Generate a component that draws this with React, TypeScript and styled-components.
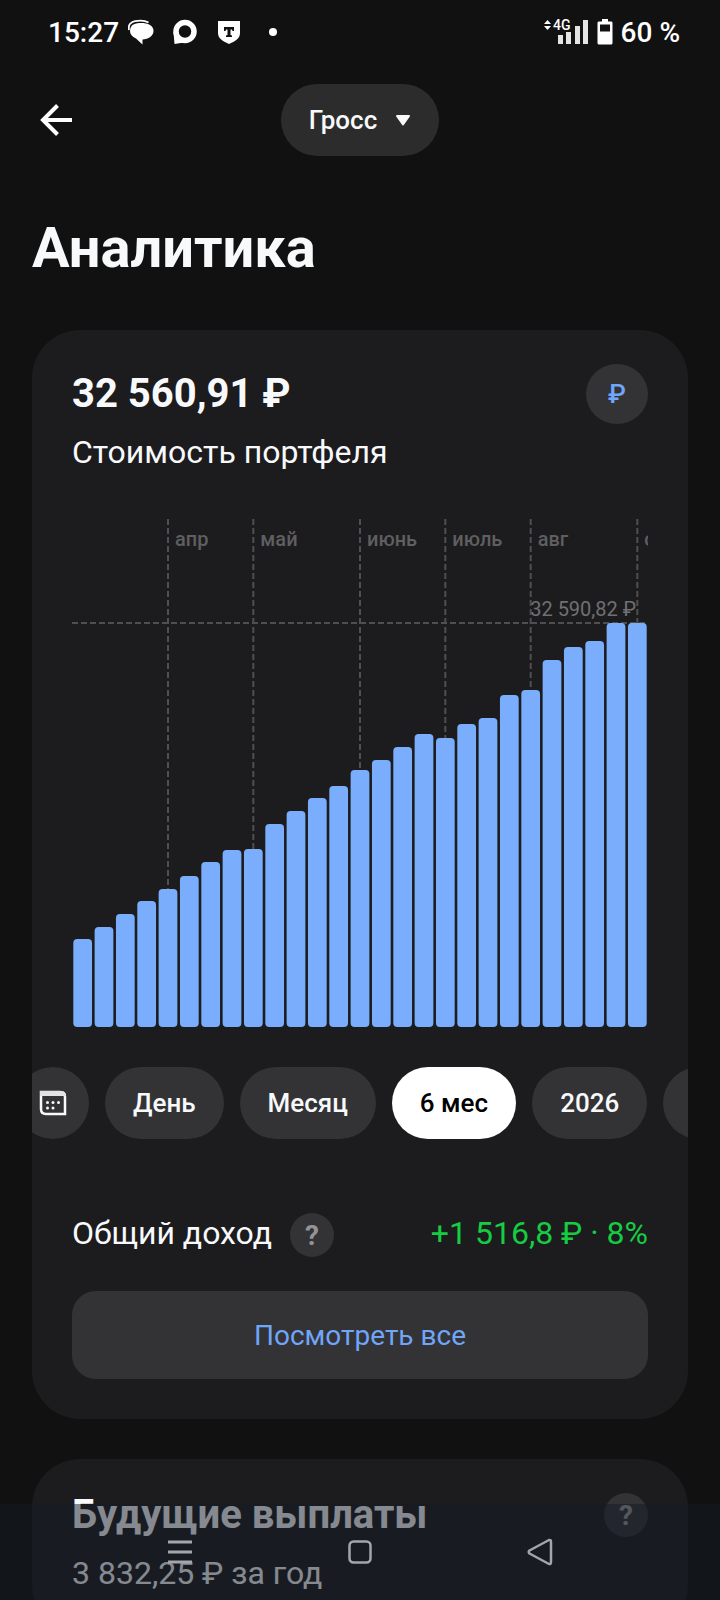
import styled, { createGlobalStyle } from 'styled-components';

const GlobalStyle = createGlobalStyle`
  * {
    box-sizing: border-box;
  }
  body {
    margin: 0;
    background-color: #111111;
    color: #f8f9fb;
    font-family: Roboto, 'Noto Sans', sans-serif;
  }
  button {
    border: none;
    padding: 0;
    font-family: inherit;
    color: inherit;
    cursor: pointer;
  }
  h1, h2, p {
    margin: 0;
  }
  svg {
    display: block;
    flex-shrink: 0;
  }
`;

const Page = styled.div`
  height: 100vh;
  overflow: hidden;
`;

const StatusBar = styled.div`
  display: flex;
  justify-content: space-between;
  align-items: center;
  height: 64px;
  padding: 0 40px 0 48px;
  font-size: 28px;
  font-weight: 500;
  color: #ffffff;
`;

const StatusGroup = styled.div<{ $gap: number }>`
  display: flex;
  align-items: center;
  gap: ${(props) => props.$gap}px;
`;

const Header = styled.header`
  display: grid;
  grid-template-columns: 1fr auto 1fr;
  align-items: center;
  height: 112px;
  padding: 0 32px;
`;

const BackButton = styled.button`
  display: flex;
  align-items: center;
  justify-content: center;
  width: 48px;
  height: 48px;
  background: none;
`;

const AccountButton = styled.button`
  display: flex;
  align-items: center;
  gap: 18px;
  height: 72px;
  padding: 0 28px;
  border-radius: 36px;
  background-color: #2c2c2c;
  font-size: 26px;
  font-weight: 500;
`;

const Title = styled.h1`
  padding: 40px 32px 0;
  font-size: 56px;
  line-height: 64px;
  font-weight: 700;
`;

const Cards = styled.main`
  display: flex;
  flex-direction: column;
  gap: 40px;
  padding: 50px 32px 0;
`;

const Card = styled.section<{ $compact?: boolean }>`
  padding: ${(props) => (props.$compact ? 26 : 34)}px 40px 40px;
  border-radius: 48px;
  background-color: #1c1c1e;
  overflow: hidden;
`;

const CardHead = styled.div`
  display: flex;
  justify-content: space-between;
  align-items: flex-start;
`;

const CardTitle = styled.h2`
  font-size: 40px;
  line-height: 60px;
  font-weight: 700;
`;

const CardText = styled.p`
  margin-top: 8px;
  font-size: 32px;
  line-height: 40px;
`;

const CurrencyButton = styled.button`
  width: 62px;
  height: 60px;
  border-radius: 50%;
  background-color: #333335;
  color: #70a5f8;
  font-size: 26px;
  font-weight: 500;
`;

const HelpButton = styled.button`
  width: 44px;
  height: 44px;
  border-radius: 50%;
  background-color: #333335;
  color: #929397;
  font-size: 28px;
  font-weight: 700;

  ${CardHead} & {
    margin-top: 8px;
  }
`;

const ChartBox = styled.div`
  margin-top: 46px;

  svg {
    width: 100%;
    height: auto;
  }
`;

const Periods = styled.div`
  display: flex;
  gap: 16px;
  margin: 40px -40px 0;
  overflow: hidden;
`;

const Period = styled.button<{ $active?: boolean }>`
  flex-shrink: 0;
  height: 72px;
  padding: 0 28px;
  border-radius: 36px;
  background-color: ${(props) => (props.$active ? '#ffffff' : '#333335')};
  color: ${(props) => (props.$active ? '#000000' : '#f8f9fb')};
  font-size: 26px;
  font-weight: 500;
`;

const CalendarButton = styled(Period)`
  padding: 0 22px;
  /* the list is scrolled a little to the left */
  margin-left: -15px;
`;

const IncomeRow = styled.div`
  display: flex;
  align-items: flex-start;
  justify-content: space-between;
  margin-top: 74px;
`;

const IncomeLabel = styled.div`
  display: flex;
  align-items: flex-start;
  gap: 18px;
  font-size: 32px;
  line-height: 40px;
`;

const Income = styled.span`
  font-size: 32px;
  line-height: 40px;
  color: #16cc42;
`;

const ShowAll = styled.button`
  width: 100%;
  height: 88px;
  margin-top: 34px;
  border-radius: 24px;
  background-color: #333335;
  color: #70a5f8;
  font-size: 28px;
`;

const NavBar = styled.nav`
  position: fixed;
  left: 0;
  right: 0;
  bottom: 0;
  display: flex;
  justify-content: center;
  gap: 132px;
  height: 96px;
  background-color: rgba(20, 28, 38, 0.5);
`;

const NavButton = styled.button`
  display: flex;
  align-items: center;
  justify-content: center;
  width: 48px;
  height: 96px;
  background: none;
`;

const CHART_WIDTH = 576;
const CHART_HEIGHT = 509;
const MAX_LINE = 105;

const bars = [
  88, 100, 113, 126, 138, 151, 165, 177, 178, 203, 216, 229, 241, 257, 267,
  280, 293, 289, 303, 309, 332, 337, 367, 380, 386, 404, 404,
];

const months = [
  { name: 'апр', bar: 4 },
  { name: 'май', bar: 8 },
  { name: 'июнь', bar: 13 },
  { name: 'июль', bar: 17 },
  { name: 'авг', bar: 21 },
  { name: 'сент', bar: 26 },
];

function Chart() {
  const step = CHART_WIDTH / bars.length;
  return (
    <ChartBox>
      <svg
        viewBox={`0 0 ${CHART_WIDTH} ${CHART_HEIGHT}`}
        role="img"
        aria-label="Стоимость портфеля за 6 месяцев"
      >
        <g stroke="#4f4f51" strokeWidth="2" strokeDasharray="6 3">
          {months.map((month) => {
            const x = (month.bar + 0.5) * step;
            return (
              <line
                key={month.name}
                x1={x}
                x2={x}
                y1="1"
                y2={CHART_HEIGHT - bars[month.bar]}
              />
            );
          })}
          <line x1="0" x2={CHART_WIDTH} y1={MAX_LINE} y2={MAX_LINE} />
        </g>
        <g fill="#5f5f61" fontSize="20" fontWeight="500">
          {months.map((month) => (
            <text key={month.name} x={(month.bar + 0.5) * step + 7} y="28">
              {month.name}
            </text>
          ))}
          <text x="564" y="98" textAnchor="end" fontWeight="400" fill="#707072">
            32 590,82 ₽
          </text>
        </g>
        <g fill="#7aadfb">
          {bars.map((value, i) => (
            <rect
              key={i}
              x={i * step + 1.3}
              y={CHART_HEIGHT - value}
              width={step - 2.6}
              height={value}
              rx="4"
            />
          ))}
        </g>
      </svg>
    </ChartBox>
  );
}

function ChatIcon() {
  return (
    <svg width="26" height="26" viewBox="0 0 26 26" fill="#ffffff">
      <path d="M1 11C0 6 2.500 3 7 2.200C11 1.500 16 1 20.500 3.500" fill="none" stroke="#ffffff" strokeWidth="1.800" />
      <path d="M3 8C4.500 5 8 4 13 4C20 4 25.500 6.500 25.500 12C25.500 17 20.500 20 14.500 20.500V25.500L8 19.500C4 17.500 2 15 2 12Q2 9.500 3 8Z" />
    </svg>
  );
}

function RingIcon() {
  return (
    <svg width="26" height="26" viewBox="0 0 26 26" fill="none">
      <circle cx="13" cy="12.500" r="9" stroke="#ffffff" strokeWidth="5.500" />
      <path d="M1.500 13L2.500 25L12 23.500L8 18Z" fill="#ffffff" />
    </svg>
  );
}

function ShieldIcon() {
  return (
    <svg width="26" height="26" viewBox="0 0 26 26">
      <path d="M2 2H24V14C24 19 20 22 13 25C6 22 2 19 2 14Z" fill="#ffffff" />
      <path d="M8 8H18V12H16.500L16 10.500H14.500V16L16 16.500V18H10V16.500L11.500 16V10.500H10L9.500 12H8Z" fill="#111111" />
    </svg>
  );
}

function SignalIcon() {
  return (
    <svg width="46" height="26" viewBox="0 0 46 26" fill="#ffffff">
      <path d="M1 5L4.500 1L8 5ZM1 7L4.500 11L8 7Z" />
      <text x="10" y="11" fontSize="14" fontWeight="500">4G</text>
      <g fill="#e4e4e4">
        <rect x="15" y="16" width="5" height="9" />
        <rect x="23" y="13" width="5" height="12" />
        <rect x="32" y="7" width="5" height="18" />
        <rect x="40" y="1" width="5" height="24" />
      </g>
    </svg>
  );
}

function BatteryIcon() {
  return (
    <svg width="16" height="26" viewBox="0 0 16 26">
      <path d="M5 0H11V2.500H14.500Q15.500 2.500 15.500 4V24Q15.500 25.500 14 25.500H2Q0.500 25.500 0.500 24V4Q0.500 2.500 1.500 2.500H5Z" fill="#ffffff" />
      <rect x="3" y="5.500" width="10" height="7" fill="#111111" />
    </svg>
  );
}

function CalendarIcon() {
  return (
    <svg width="28" height="26" viewBox="0 0 28 26">
      <path d="M2 2V19Q2 24 7 24H26V7Q26 2 21 2Z" fill="none" stroke="#f8f9fb" strokeWidth="2.500" />
      <path d="M1 1H22Q27 1 27 6H1Z" fill="#e3e3e4" />
      <g fill="#f8f9fb">
        <circle cx="8.500" cy="12.500" r="1.500" />
        <circle cx="14" cy="12.500" r="1.500" />
        <circle cx="19.500" cy="12.500" r="1.500" />
        <circle cx="8.500" cy="18" r="1.500" />
        <circle cx="14" cy="18" r="1.500" />
      </g>
    </svg>
  );
}

function App() {
  return (
    <Page>
      <GlobalStyle />
      <StatusBar>
        <StatusGroup $gap={18}>
          <StatusGroup $gap={9}>
            <span>15:27</span>
            <ChatIcon />
          </StatusGroup>
          <RingIcon />
          <ShieldIcon />
          <svg width="26" height="26" viewBox="0 0 26 26">
            <circle cx="13" cy="13" r="4" fill="#ffffff" />
          </svg>
        </StatusGroup>
        <StatusGroup $gap={8}>
          <SignalIcon />
          <BatteryIcon />
          <span>60 %</span>
        </StatusGroup>
      </StatusBar>

      <Header>
        <BackButton aria-label="Назад">
          <svg width="34" height="34" viewBox="0 0 34 34" fill="none" stroke="#ffffff" strokeWidth="4">
            <path d="M18.500 2.500L4 17L18.500 31.500M4 17H33" />
          </svg>
        </BackButton>
        <AccountButton>
          Гросс
          <svg width="16" height="12" viewBox="0 0 16 12">
            <path d="M2 2H14L8 10.500Z" fill="#f8f9fb" stroke="#f8f9fb" strokeWidth="2" strokeLinejoin="round" />
          </svg>
        </AccountButton>
      </Header>

      <Title>Аналитика</Title>

      <Cards>
        <Card>
          <CardHead>
            <div>
              <CardTitle>32 560,91 ₽</CardTitle>
              <CardText>Стоимость портфеля</CardText>
            </div>
            <CurrencyButton aria-label="Валюта">₽</CurrencyButton>
          </CardHead>
          <Chart />
          <Periods>
            <CalendarButton aria-label="Выбрать даты">
              <CalendarIcon />
            </CalendarButton>
            <Period>День</Period>
            <Period>Месяц</Period>
            <Period $active>6 мес</Period>
            <Period>2026</Period>
            <Period>2025</Period>
          </Periods>
          <IncomeRow>
            <IncomeLabel>
              Общий доход
              <HelpButton aria-label="Что такое общий доход">?</HelpButton>
            </IncomeLabel>
            <Income>+1 516,8 ₽ · 8%</Income>
          </IncomeRow>
          <ShowAll>Посмотреть все</ShowAll>
        </Card>

        <Card $compact>
          <CardHead>
            <div>
              <CardTitle>Будущие выплаты</CardTitle>
              <CardText>3 832,25 ₽ за год</CardText>
            </div>
            <HelpButton aria-label="Что такое будущие выплаты">?</HelpButton>
          </CardHead>
        </Card>
      </Cards>

      <NavBar>
        <NavButton aria-label="Меню">
          <svg width="24" height="24" viewBox="0 0 24 24" fill="#a3a6ab">
            <path d="M0 0.500H24V3.500H0ZM0 10.500H24V13.500H0ZM0 20.500H24V23.500H0Z" />
          </svg>
        </NavButton>
        <NavButton aria-label="Домой">
          <svg width="24" height="24" viewBox="0 0 24 24" fill="none" stroke="#a3a6ab" strokeWidth="2.500">
            <rect x="1.500" y="1.500" width="21" height="21" rx="4" />
          </svg>
        </NavButton>
        <NavButton aria-label="Назад">
          <svg width="26" height="28" viewBox="0 0 26 28" fill="none" stroke="#a3a6ab" strokeWidth="2.500" strokeLinejoin="round">
            <path d="M2.500 12.500Q1 14 2.500 15.500L22 26Q24 26.500 24 24V4Q24 1.500 22 2Z" />
          </svg>
        </NavButton>
      </NavBar>
    </Page>
  );
}

export default App;
